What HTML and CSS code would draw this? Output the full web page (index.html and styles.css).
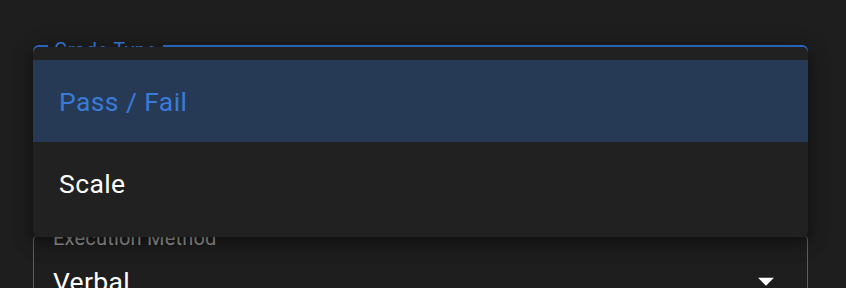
FILE: index.html
```html
<!DOCTYPE html>
<html lang="en">
<head>
<meta charset="utf-8">
<title>Grade Type</title>
<link rel="stylesheet" href="styles.css">
</head>
<body>
<main class="form">
  <div class="field field-focused">
    <span class="field-label">Grade Type</span>
    <div class="field-value"></div>
  </div>
  <div class="field field-second">
    <span class="field-label">Execution Method</span>
    <div class="field-value">
      <span class="value-text">Verbal</span>
      <svg class="arrow" viewBox="0 0 24 24" width="38" height="38" aria-hidden="true"><path d="M7 10l5 5 5-5z" fill="#ffffff"/></svg>
    </div>
  </div>
  <div class="menu" role="listbox">
    <div class="menu-item menu-item-selected" role="option">Pass / Fail</div>
    <div class="menu-item" role="option">Scale</div>
  </div>
</main>
</body>
</html>
```
FILE: styles.css
```css
html, body {
  margin: 0;
  padding: 0;
  background: #1e1e1e;
  font-family: Roboto, "Liberation Sans", Arial, sans-serif;
  overflow: hidden;
}

.form {
  position: relative;
  width: 775px;
  padding: 45px 0 0 33px;
  display: flex;
  flex-direction: column;
  gap: 99px;
}

.field {
  position: relative;
  box-sizing: border-box;
  height: 90px;
  border: 1.5px solid #5f5f5f;
  border-radius: 6px;
}

.field-focused {
  border: 2px solid #2f6fd0;
}

.field-label {
  position: absolute;
  top: -7px;
  left: 13px;
  padding: 0 6px;
  background: #1e1e1e;
  font-size: 20px;
  line-height: 20px;
  letter-spacing: 0.2px;
  color: #9c9c9c;
  white-space: nowrap;
}

.field-focused .field-label {
  color: #3478d6;
  top: -7.5px;
  letter-spacing: 0.3px;
}

.field-value {
  height: 100%;
  display: flex;
  align-items: center;
  justify-content: space-between;
  padding: 4px 22px 0 19px;
  box-sizing: border-box;
}

.value-text {
  font-size: 26.5px;
  letter-spacing: 0.3px;
  color: #ffffff;
}

.arrow {
  display: block;
  margin-top: -1px;
}

.menu {
  position: absolute;
  left: 33px;
  top: 47px;
  width: 775px;
  box-sizing: border-box;
  padding: 13px 0;
  background: #212121;
  border-radius: 6px;
  box-shadow: 0 5px 10px rgba(0, 0, 0, 0.25), 0 8px 20px rgba(0, 0, 0, 0.18), 0 3px 28px rgba(0, 0, 0, 0.14);
}

.menu-item {
  height: 82px;
  display: flex;
  align-items: center;
  padding-left: 26px;
  font-size: 26.5px;
  letter-spacing: 0.4px;
  color: #ffffff;
}

.menu-item-selected {
  background: #263a56;
  color: #3a7bd6;
}
```
